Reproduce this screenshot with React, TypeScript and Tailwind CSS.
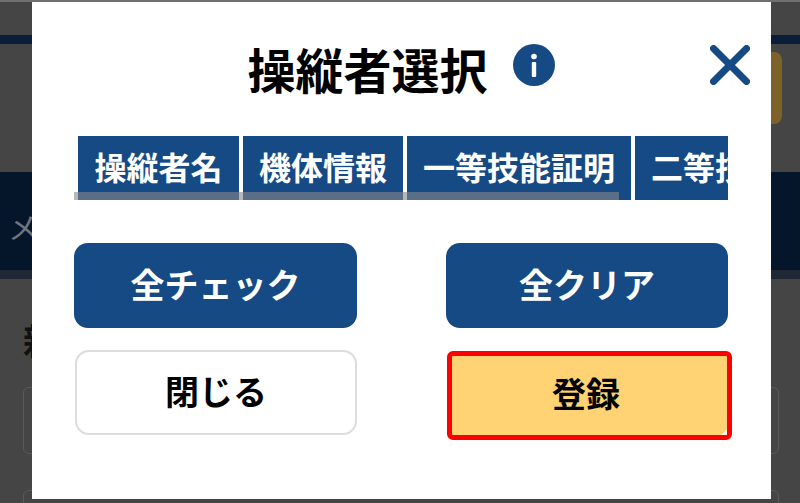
const JP = "font-['Noto_Sans_CJK_JP','Noto_Sans',sans-serif]";

function Tab({ label, className }: { label: string; className: string }) {
  return (
    <div className={`flex h-full shrink-0 items-start justify-center overflow-hidden whitespace-nowrap bg-[#164a85] pt-[8px] text-[32px] font-bold leading-[44px] text-white ${className}`}>
      {label}
    </div>
  );
}

export default function App() {
  return (
    <div className={`relative h-[503px] w-[800px] overflow-hidden bg-[#454545] ${JP}`}>
      <div className="h-[35px]" />
      <div className="h-[9px] bg-[#0a1e38]" />
      <div className="flex h-[128px] justify-end pr-[18px] pt-[8px]">
        <div className="h-[72px] w-[40px] rounded-[8px] bg-[#7d6229]" />
      </div>
      <div className="flex h-[98px] items-center bg-[#06162a] pl-[8px] pt-[10px] text-[30px] text-[#6c7480]">
        メニュー
      </div>
      <div className="h-[9px] bg-[#1f2834]" />
      <div className="pl-[23px] pr-[21px] pt-[38px]">
        <div className="text-[36px] font-bold leading-[44px] text-[#111]">新規</div>
        <div className="mt-[26px] h-[67px] rounded-[6px] border border-[#5a5a5a]" />
        <div className="mt-[36px] h-[40px] rounded-[6px] border border-[#5a5a5a]" />
      </div>

      <div className="absolute left-0 top-0 h-[2px] w-full bg-[#6f6f6f]" />

      <div className="absolute left-[32px] top-[2px] flex h-[497px] w-[739px] flex-col bg-white pl-[42px] pr-[43px]">
        <div className="flex h-[134px] items-start justify-center gap-[25px] pt-[35px]">
          <h1 className="text-[48px] font-bold leading-[62px] text-black">操縦者選択</h1>
          <svg width="42" height="42" viewBox="0 0 42 42" className="mt-[7px] shrink-0">
            <circle cx="21" cy="21" r="21" fill="#164a85" />
            <circle cx="21" cy="12.5" r="2.8" fill="#fff" />
            <rect x="18.8" y="18" width="4.4" height="15" rx="1" fill="#fff" />
          </svg>
        </div>
        <button className="absolute left-[678px] top-[43px]" aria-label="閉じる">
          <svg width="40" height="40" viewBox="0 0 40 40" className="block">
            <path d="M3.5 3.5 L36.5 36.5 M36.5 3.5 L3.5 36.5" stroke="#164a85" strokeWidth="7" strokeLinecap="round" fill="none" />
          </svg>
        </button>

        <div className="relative h-[64px] w-[654px] overflow-hidden">
          <div className="flex h-full gap-[4px] pl-[4px]">
            <Tab label="操縦者名" className="w-[161px]" />
            <Tab label="機体情報" className="w-[160px]" />
            <Tab label="一等技能証明" className="w-[224px]" />
            <Tab label="二等技能証明" className="w-[224px]" />
          </div>
          <div className="absolute bottom-0 left-0 h-[8px] w-[545px] bg-[#898989]/60" />
        </div>

        <div className="mt-[43px] flex justify-between">
          <button className="h-[85px] w-[283px] rounded-[14px] bg-[#164a85] pb-[4px] text-[34px] font-bold text-white">全チェック</button>
          <button className="h-[85px] w-[282px] rounded-[14px] bg-[#164a85] pb-[4px] text-[34px] font-bold text-white">全クリア</button>
        </div>
        <div className="mt-[22px] flex items-start justify-between">
          <button className="ml-[1px] h-[85px] w-[282px] rounded-[14px] border-2 border-[#dddddd] bg-white pb-[4px] text-[34px] font-bold text-black">閉じる</button>
          <button className="relative -mr-[4px] mt-[1px] h-[89px] w-[285px] rounded-[6px] border-[5px] border-[#ff0000] bg-[#ffd274] pb-[7px] pr-[7px] text-[34px] font-bold text-black">
            登録
            <span className="absolute bottom-0 right-0 h-[6px] w-[6px] bg-white/80 [clip-path:polygon(100%_0,100%_100%,0_100%)]" />
          </button>
        </div>
      </div>
    </div>
  );
}
